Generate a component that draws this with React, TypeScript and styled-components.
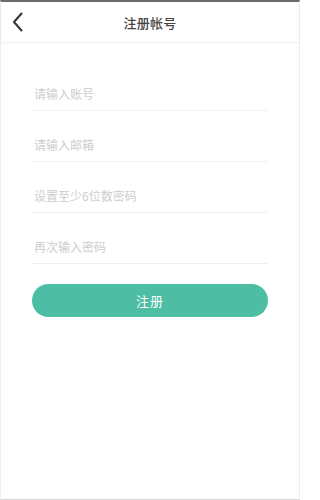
import React, { useState } from "react";
import styled, { createGlobalStyle } from "styled-components";

const GlobalStyle = createGlobalStyle`
  html, body {
    margin: 0;
    padding: 0;
    background: #fff;
  }
  body {
    font-family: "Noto Sans CJK SC", "Noto Sans", sans-serif;
  }
`;

const Screen = styled.div`
  width: 300px;
  height: 500px;
  box-sizing: border-box;
  background: #fff;
  border-top: 2px solid #6b6b6b;
  border-left: 1px solid #ececec;
  border-right: 1px solid #ececec;
  border-bottom: 1px solid #d8d8d8;
  display: flex;
  flex-direction: column;
`;

const Header = styled.div`
  height: 40px;
  display: flex;
  align-items: center;
  justify-content: center;
  position: relative;
  border-bottom: 1px solid #f2f2f2;
  box-shadow: 0 1px 2px rgba(0, 0, 0, 0.02);
`;

const BackButton = styled.button`
  position: absolute;
  left: 5px;
  top: 50%;
  transform: translateY(-50%);
  width: 24px;
  height: 24px;
  padding: 0;
  border: none;
  background: none;
  display: flex;
  align-items: center;
  justify-content: center;
  cursor: pointer;
`;

const Title = styled.h1`
  margin: 0;
  font-size: 13px;
  font-weight: 500;
  color: #444;
  letter-spacing: 0.3px;
`;

const Form = styled.form`
  display: flex;
  flex-direction: column;
  padding: 17px 31px 0 31px;
`;

const Field = styled.label`
  height: 50px;
  display: flex;
  align-items: flex-end;
  border-bottom: 1px solid #f0f0f0;
`;

const Input = styled.input`
  width: 100%;
  border: none;
  outline: none;
  padding: 0 2px 8px;
  background: transparent;
  font-family: "Noto Sans CJK SC", "Noto Sans", sans-serif;
  font-size: 12px;
  color: #333;

  &::placeholder {
    color: #cdcdcd;
  }
`;

const SubmitButton = styled.button`
  margin-top: 20px;
  height: 33px;
  border: none;
  border-radius: 17px;
  background: #4dbea4;
  color: #fff;
  font-family: "Noto Sans CJK SC", "Noto Sans", sans-serif;
  font-size: 13px;
  letter-spacing: 1px;
  cursor: pointer;
`;

const fields = [
  { name: "account", type: "text", placeholder: "请输入账号" },
  { name: "email", type: "email", placeholder: "请输入邮箱" },
  { name: "password", type: "password", placeholder: "设置至少6位数密码" },
  { name: "confirm", type: "password", placeholder: "再次输入密码" },
];

const App: React.FC = () => {
  const [values, setValues] = useState<Record<string, string>>({});

  const handleChange = (e: React.ChangeEvent<HTMLInputElement>) => {
    setValues({ ...values, [e.target.name]: e.target.value });
  };

  return (
    <>
      <GlobalStyle />
      <Screen>
        <Header>
          <BackButton type="button" aria-label="返回">
            <svg width="14" height="20" viewBox="0 0 14 20" fill="none">
              <path
                d="M10.5 1.5 L3 10 L10.5 18.5"
                stroke="#333"
                strokeWidth="2"
                strokeLinecap="round"
                strokeLinejoin="round"
              />
            </svg>
          </BackButton>
          <Title>注册帐号</Title>
        </Header>
        <Form onSubmit={(e) => e.preventDefault()}>
          {fields.map((f) => (
            <Field key={f.name}>
              <Input
                name={f.name}
                type={f.type}
                placeholder={f.placeholder}
                value={values[f.name] || ""}
                onChange={handleChange}
              />
            </Field>
          ))}
          <SubmitButton type="submit">注册</SubmitButton>
        </Form>
      </Screen>
    </>
  );
};

export default App;
